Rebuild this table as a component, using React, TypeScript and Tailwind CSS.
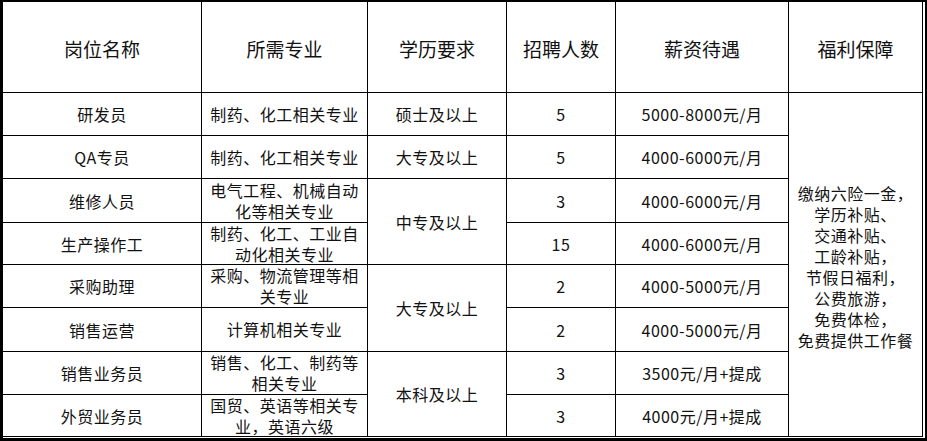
const rows = [
  { name: "研发员", major: ["制药、化工相关专业"], count: "5", pay: "5000-8000元/月" },
  { name: "QA专员", major: ["制药、化工相关专业"], count: "5", pay: "4000-6000元/月" },
  { name: "维修人员", major: ["电气工程、机械自动", "化等相关专业"], count: "3", pay: "4000-6000元/月" },
  { name: "生产操作工", major: ["制药、化工、工业自", "动化相关专业"], count: "15", pay: "4000-6000元/月" },
  { name: "采购助理", major: ["采购、物流管理等相", "关专业"], count: "2", pay: "4000-5000元/月" },
  { name: "销售运营", major: ["计算机相关专业"], count: "2", pay: "4000-5000元/月" },
  { name: "销售业务员", major: ["销售、化工、制药等", "相关专业"], count: "3", pay: "3500元/月+提成" },
  { name: "外贸业务员", major: ["国贸、英语等相关专", "业，英语六级"], count: "3", pay: "4000元/月+提成" },
];

const headers = ["岗位名称", "所需专业", "学历要求", "招聘人数", "薪资待遇", "福利保障"];

const benefits = [
  "缴纳六险一金，",
  "学历补贴、",
  "交通补贴、",
  "工龄补贴，",
  "节假日福利，",
  "公费旅游，",
  "免费体检，",
  "免费提供工作餐",
];

// merged cells of the education column
const education = [
  { text: "硕士及以上", row: "row-start-2 row-span-1" },
  { text: "大专及以上", row: "row-start-3 row-span-1" },
  { text: "中专及以上", row: "row-start-4 row-span-2" },
  { text: "大专及以上", row: "row-start-6 row-span-2" },
  { text: "本科及以上", row: "row-start-8 row-span-2" },
];

const rowStarts = [
  "row-start-2",
  "row-start-3",
  "row-start-4",
  "row-start-5",
  "row-start-6",
  "row-start-7",
  "row-start-8",
  "row-start-9",
];

const cell = "bg-white flex flex-col items-center justify-center text-center";

export default function App() {
  return (
    <div className="w-[927px] h-[441px] bg-white border-l-[3px] border-t-2 border-r-2 border-b-[3px] border-black pr-[2px] pb-px font-['Noto_Sans_CJK_SC',sans-serif] text-[#111] text-[16px] tracking-[0.5px]">
      <div className="h-full grid grid-cols-[198px_165px_138px_108px_172px_133px] grid-rows-[90px_42px_42px_43px_41px_42px_43px_42px_41px] gap-px bg-black border-r border-b border-black">
        {headers.map((h) => (
          <div key={h} className={`${cell} row-start-1 text-[19px] tracking-normal pt-1`}>
            {h}
          </div>
        ))}

        {rows.map((r, i) => (
          <div key={r.name} className="contents">
            <div className={`${cell} ${rowStarts[i]} col-start-1`}>{r.name}</div>
            <div className={`${cell} ${rowStarts[i]} col-start-2 leading-[21px]`}>
              {r.major.map((m) => (
                <span key={m}>{m}</span>
              ))}
            </div>
            <div className={`${cell} ${rowStarts[i]} col-start-4`}>{r.count}</div>
            <div className={`${cell} ${rowStarts[i]} col-start-5`}>{r.pay}</div>
          </div>
        ))}

        {education.map((e, i) => (
          <div key={i} className={`${cell} ${e.row} col-start-3`}>
            {e.text}
          </div>
        ))}

        <div className={`${cell} row-start-2 row-span-8 col-start-6 leading-[21px] pt-1`}>
          {benefits.map((b) => (
            <span key={b}>{b}</span>
          ))}
        </div>
      </div>
    </div>
  );
}
